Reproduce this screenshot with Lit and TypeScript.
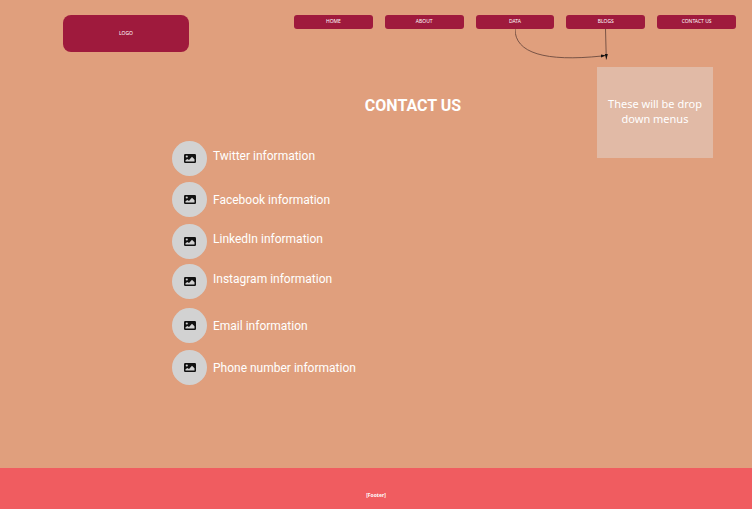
import { LitElement, html, css, svg } from "lit";
import { customElement } from "lit/decorators.js";
import { classMap } from "lit/directives/class-map.js";

interface Contact {
  label: string;
  raised: boolean;
}

const contacts: Contact[] = [
  { label: "Twitter information", raised: true },
  { label: "Facebook information", raised: false },
  { label: "LinkedIn information", raised: true },
  { label: "Instagram information", raised: true },
  { label: "Email information", raised: false },
  { label: "Phone number information", raised: false },
];

const pages = ["HOME", "ABOUT", "DATA", "BLOGS", "CONTACT US"];

@customElement("site-nav")
export class SiteNav extends LitElement {
  static styles = css`
    :host {
      display: block;
      position: relative;
    }
    .bar {
      display: grid;
      grid-template-columns: repeat(5, 1fr);
      gap: 12px;
    }
    .item {
      height: 14px;
      border-radius: 3px;
      background: #9f1a3d;
      color: #fff;
      font-size: 5px;
      line-height: 13px;
      text-align: center;
      text-decoration: none;
    }
    .arrows {
      position: absolute;
      top: 14px;
      left: 50%;
      width: 100px;
      height: 34px;
    }
    .menu {
      position: absolute;
      top: 52px;
      right: 23px;
      display: flex;
      align-items: center;
      justify-content: center;
      box-sizing: border-box;
      width: 116px;
      height: 91px;
      padding: 0 8px 4px;
      background: #e1baa6;
      color: #fff;
      font-size: 11px;
      line-height: 15px;
      text-align: center;
    }
  `;

  render() {
    return html`
      <nav class="bar">
        ${pages.map((page) => html`<a class="item" href="#">${page}</a>`)}
      </nav>
      <svg class="arrows" viewBox="0 0 100 34" aria-hidden="true">
        ${svg`
          <g fill="none" stroke="#5e4037" stroke-width="0.8">
            <path d="M0 0C0 24 30 33 87 27" />
            <path d="M90.5 0L91.300 30.500" />
          </g>
          <path d="M86 25.600L91 26.600L86 28.400Z" fill="#111" />
          <path d="M89.800 25L92.800 25L91.400 30.500Z" fill="#111" />
        `}
      </svg>
      <div class="menu">These will be drop down menus</div>
    `;
  }
}

@customElement("app-root")
export class AppRoot extends LitElement {
  static styles = css`
    :host {
      display: flex;
      flex-direction: column;
      min-height: 100vh;
      background: #e09f7d;
      color: #fff;
      font-family: "Noto Sans", "Open Sans", sans-serif;
    }
    .header {
      display: flex;
      align-items: flex-start;
      justify-content: space-between;
      gap: 16px;
      padding: 15px 16px 0 63px;
    }
    .logo {
      flex: 0 0 126px;
      height: 37px;
      border-radius: 8px;
      background: #9f1a3d;
      color: #fff;
      font-size: 5px;
      line-height: 37px;
      text-align: center;
      text-decoration: none;
    }
    .nav {
      flex: 0 1 442px;
    }
    .main {
      flex: 1;
      padding-top: 44px;
      font-family: Roboto, "Noto Sans", sans-serif;
    }
    .title {
      margin: 0;
      padding-left: 74px;
      font-size: 16px;
      line-height: 20px;
      font-weight: 700;
      text-align: center;
    }
    .contacts {
      display: grid;
      grid-template-rows: 41px 42px 40px 44px 42px 35px;
      margin: 25px 0 0;
      padding: 0 0 0 172px;
      list-style: none;
    }
    .contact {
      display: flex;
      gap: 6px;
      height: 35px;
    }
    .badge {
      display: grid;
      place-items: center;
      width: 35px;
      height: 35px;
      border-radius: 50%;
      background: #d2d2d2;
    }
    .picture {
      width: 12px;
      height: 11px;
    }
    .label {
      align-self: center;
      font-size: 12px;
      line-height: 16px;
    }
    .raised {
      padding-bottom: 6px;
    }
    .footer {
      padding: 22px 0 9px;
      background: #f05c60;
      font-size: 5px;
      line-height: 10px;
      font-weight: 700;
      text-align: center;
    }
  `;

  render() {
    return html`
      <header class="header">
        <a class="logo" href="#">LOGO</a>
        <site-nav class="nav"></site-nav>
      </header>
      <main class="main">
        <h1 class="title">CONTACT US</h1>
        <ul class="contacts">
          ${contacts.map(
            (c) => html`
              <li class="contact">
                <span class="badge">
                  <svg class="picture" viewBox="0 0 12 11" aria-hidden="true">
                    <rect y="1" width="12" height="9" rx="1.200" fill="#111" />
                    <circle cx="2.800" cy="3.500" r="1.100" fill="#d2d2d2" />
                    <path
                      d="M1.500 8.500V7.300L3.300 6L5 7L8 3.800L10.500 6.300V8.500Z"
                      fill="#d2d2d2"
                    />
                  </svg>
                </span>
                <span class=${classMap({ label: true, raised: c.raised })}>${c.label}</span>
              </li>
            `
          )}
        </ul>
      </main>
      <footer class="footer">[Footer]</footer>
    `;
  }
}
